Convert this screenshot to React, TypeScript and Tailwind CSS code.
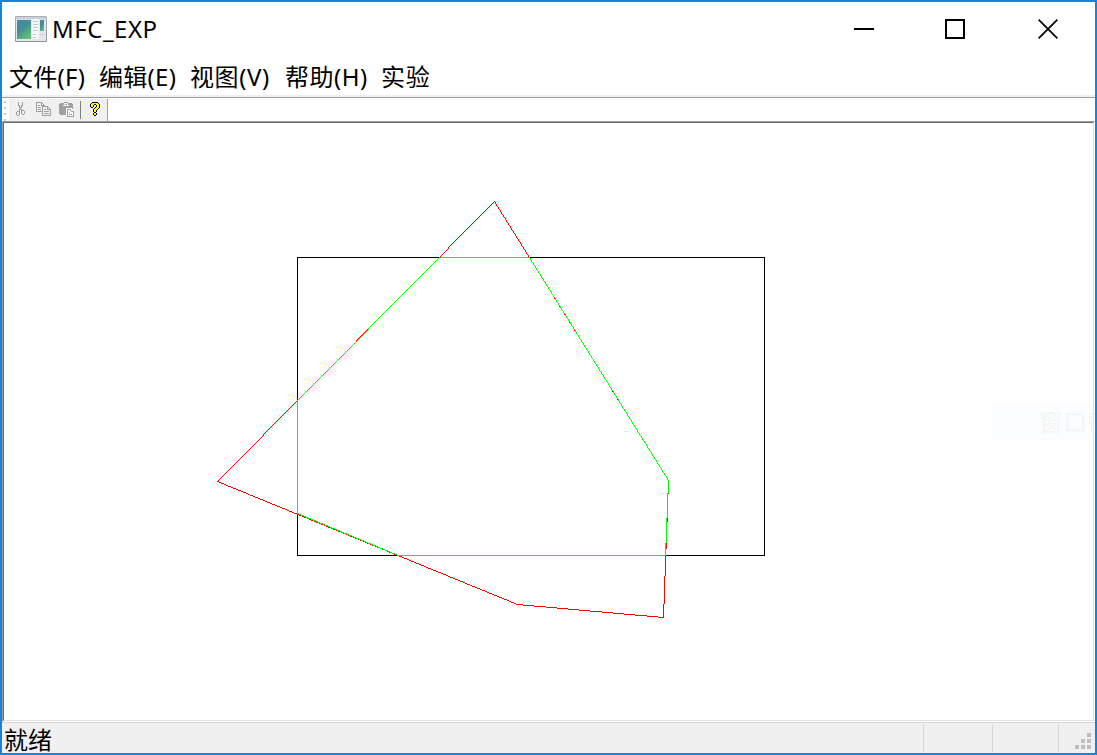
import React from "react";

const FONT = "font-['Noto_Sans','Noto_Sans_CJK_SC',sans-serif]";

type Palette = Record<string, string>;

const ICON_COLORS: Palette = { g: "#a0a0a0", k: "#000000", y: "#ffff00", w: "#ffffff" };

const CUT = [
  "..g...g..",
  "..g...g..",
  "..g...g..",
  "..gg.gg..",
  "...g.g...",
  "...ggg...",
  "....g....",
  "...ggg...",
  "...g.ggg.",
  ".ggg.g..g",
  "g..g.g..g",
  "g..g.g..g",
  "g..g..gg.",
  ".gg......",
];

const COPY = [
  "gggggg.........",
  "g....gg........",
  "g....g.g.......",
  "g.gg.gggg......",
  "g.....gggggg...",
  "g.ggg.g....gg..",
  "g.....g....g.g.",
  "g.ggg.g.gg.gggg",
  "g.....g.......g",
  "ggggggg.ggggg.g",
  "......g.......g",
  "......g.ggggg.g",
  "......g.......g",
  "......ggggggggg",
];

const PASTE = [
  ".....gggg......",
  ".gggg....gggg..",
  "ggggg.gg.ggggg.",
  "gggg......gggg.",
  "gggggggggggggg.",
  "gggggggggggggg.",
  "gggggggwwwwwwg.",
  "gggggggwggggww.",
  "gggggggwgwwgww.",
  "gggggggwgwwwggg",
  "gggggggwgwgwwwg",
  "gggggggwgwwwwwg",
  ".ggggggwgwgggwg",
  ".......wgwwwwwg",
  "........ggggggg",
];

const HELP = [
  "..kkkkkk..",
  ".kyyyyyyk.",
  "kyyykkyyyk",
  "kyyk..kyyk",
  "kyyk..kyyk",
  ".kk..kyyyk",
  "....kyyyk.",
  "...kyyyk..",
  "...kyyk...",
  "...kyyk...",
  "....kk....",
  "...kyyk...",
  "...kyyk...",
  "....kk....",
];

function PixelIcon({ rows, className }: { rows: string[]; className?: string }) {
  const w = rows[0].length;
  return (
    <svg width={w} height={rows.length} shapeRendering="crispEdges" className={`block shrink-0 ${className ?? ""}`}>
      {rows.flatMap((row, y) =>
        [...row].map((c, x) =>
          c === "." ? null : <rect key={`${x}-${y}`} x={x} y={y} width={1} height={1} fill={ICON_COLORS[c]} />
        )
      )}
    </svg>
  );
}

function AppIcon() {
  return (
    <svg width="32" height="26" viewBox="0 0 32 26" className="block shrink-0">
      <defs>
        <linearGradient id="pane" x1="0" y1="0" x2="0.6" y2="1">
          <stop offset="0" stopColor="#4a84b5" />
          <stop offset="0.5" stopColor="#438f96" />
          <stop offset="1" stopColor="#64bd78" />
        </linearGradient>
        <linearGradient id="frame" x1="0" y1="0" x2="0" y2="1">
          <stop offset="0" stopColor="#a9b0b8" />
          <stop offset="1" stopColor="#8d949b" />
        </linearGradient>
      </defs>
      <rect x="0.5" y="0.5" width="31" height="25" rx="0.5" fill="#e3e7ec" stroke="url(#frame)" />
      <rect x="1" y="1" width="30" height="2.5" fill="#cbd1d9" />
      <rect x="2" y="4" width="14" height="19" fill="url(#pane)" />
      <rect x="17" y="3" width="7" height="20" fill="#f6f7f8" />
      <rect x="25" y="4" width="4" height="11" fill="url(#pane)" />
      <path d="M18 5.5h5M18 8.5h5M18 11.5h5M18 14.5h5M18 18.5h3M18 21.5h3M25 18.5h4" stroke="#c5cad0" />
    </svg>
  );
}

function TitleBar() {
  return (
    <header className="flex h-[54px] shrink-0 items-start pl-[13px]">
      <div className="pt-[14px]"><AppIcon /></div>
      <h1 className="ml-[5px] mt-[9px] text-2xl leading-9 tracking-[0.5px]">MFC_EXP</h1>
      <div className="ml-auto flex pt-[17px] pr-[37px]">
        <svg width="20" height="20" shapeRendering="crispEdges"><path d="M0 10h20" stroke="#000" strokeWidth="2" /></svg>
        <svg width="20" height="20" shapeRendering="crispEdges" className="ml-[71px]"><rect x="1" y="1" width="18" height="18" fill="none" stroke="#000" strokeWidth="2" /></svg>
        <svg width="20" height="20" className="ml-[73px]"><path d="M.6.6l18.8 18.8M19.4.6L.6 19.4" stroke="#000" strokeWidth="1.8" /></svg>
      </div>
    </header>
  );
}

function MenuBar() {
  return (
    <nav className="flex h-[39px] shrink-0 pl-[7px] pt-[3px] text-2xl leading-9 tracking-[0.3px] whitespace-nowrap">
      <span className="w-[90px]">文件(F)</span>
      <span className="w-[91px]">编辑(E)</span>
      <span className="w-[95px] tracking-[0.6px]">视图(V)</span>
      <span className="w-[96px] tracking-[0.5px]">帮助(H)</span>
      <span className="tracking-[0.8px]">实验</span>
    </nav>
  );
}

function ToolBar() {
  return (
    <div className="flex h-[26px] shrink-0 border-t-2 border-[#f0f0f0]">
      <div className="flex w-full border-t border-[#a0a0a0] pt-px">
        <div className="flex w-[7px] flex-col gap-[4px] pl-[2px] pt-[2px]">
          <i className="size-[2px] bg-[#c8c8c8]" />
          <i className="size-[2px] bg-[#c8c8c8]" />
          <i className="size-[2px] bg-[#c8c8c8]" />
          <i className="size-[2px] bg-[#c8c8c8]" />
        </div>
        <div className="flex h-[22px] w-[99px] border-r border-[#a0a0a0] bg-[#f0f0f0] pl-[7px] pt-[3px]">
          <PixelIcon rows={CUT} />
          <PixelIcon rows={COPY} className="ml-[11px]" />
          <PixelIcon rows={PASTE} className="ml-[8px]" />
          <i className="ml-[6px] -mt-px h-[18px] w-px bg-[#808080]" />
          <PixelIcon rows={HELP} className="ml-[9px]" />
        </div>
      </div>
    </div>
  );
}

type Point = [number, number];

const POLYGON: Point[] = [[494, 201], [668, 480], [663, 617], [517, 604], [217, 481]];
const CLIPPED: Point[] = [[297, 400], [439, 257], [529, 257], [668, 480], [665, 555], [398, 555], [297, 513]];

// Walks each edge along its major axis, one aliased pixel per step.
function rasterize(points: Point[]): string {
  let d = "";
  points.forEach(([x0, y0], i) => {
    const [x1, y1] = points[(i + 1) % points.length];
    const steps = Math.max(Math.abs(x1 - x0), Math.abs(y1 - y0));
    for (let s = 0; s <= steps; s++) {
      const x = Math.round(x0 + ((x1 - x0) * s) / steps);
      const y = Math.round(y0 + ((y1 - y0) * s) / steps);
      d += `M${x} ${y}h1v1h-1z`;
    }
  });
  return d;
}

function Drawing() {
  return (
    <svg width="1089" height="597" viewBox="4 123 1089 597" shapeRendering="crispEdges" className="block" fill="none">
      <rect x="297.5" y="257.5" width="467" height="298" stroke="#000" />
      <path d={rasterize(POLYGON)} fill="#f00" fillRule="nonzero" />
      <path d={rasterize(CLIPPED)} fill="#0f0" fillRule="nonzero" />
    </svg>
  );
}

function StatusBar() {
  return (
    <footer className="flex h-[31px] shrink-0 border-t border-[#d7d7d7] bg-[#f0f0f0]">
      <span className="ml-[2px] w-[919px] text-2xl leading-[33px]">就绪</span>
      <i className="mt-px h-[28px] w-[69px] border-l border-[#d7d7d7]" />
      <i className="mt-px h-[28px] w-[66px] border-l border-[#d7d7d7]" />
      <i className="mt-px h-[28px] w-[17px] border-l border-[#d7d7d7]" />
      <div className="mt-[10px] grid h-[16px] grid-cols-3 gap-[2px]">
        <i className="col-start-3 size-[4px] bg-[#bfbfbf]" />
        <i className="col-start-2 size-[4px] bg-[#bfbfbf]" />
        <i className="size-[4px] bg-[#bfbfbf]" />
        <i className="size-[4px] bg-[#bfbfbf]" />
        <i className="size-[4px] bg-[#bfbfbf]" />
        <i className="size-[4px] bg-[#bfbfbf]" />
      </div>
    </footer>
  );
}

export default function App() {
  return (
    <div className={`flex h-[755px] w-[1097px] flex-col overflow-hidden border-2 border-[#1883d7] bg-white text-black ${FONT}`}>
      <TitleBar />
      <MenuBar />
      <ToolBar />
      <main className="h-[601px] shrink-0 border border-t-[#a0a0a0] border-l-[#a0a0a0] border-r-white border-b-white">
        <div className="relative h-[599px] overflow-hidden border border-t-[#696969] border-l-[#696969] border-r-[#e3e3e3] border-b-[#e3e3e3]">
          <Drawing />
          <div className="absolute left-[988px] top-[280px] h-[37px] w-[101px] overflow-hidden bg-[#fcfdff] pl-[47px] text-2xl leading-[38px] whitespace-nowrap text-[#f4f5f5]">
            窗口截
          </div>
        </div>
      </main>
      <StatusBar />
    </div>
  );
}
